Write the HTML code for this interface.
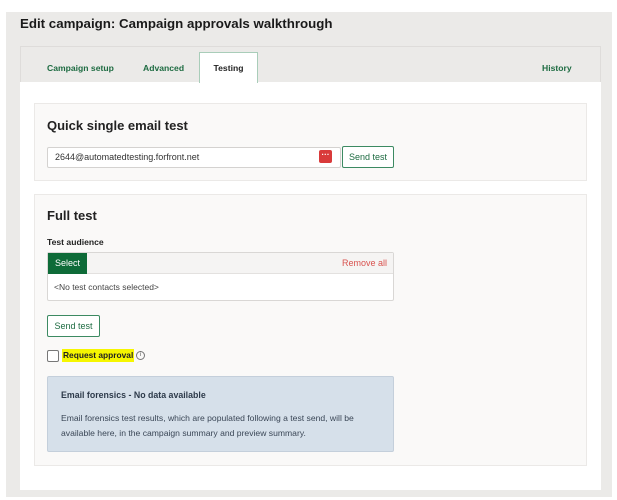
<!DOCTYPE html>
<html><head><meta charset="utf-8"><style>
*{box-sizing:border-box;margin:0;padding:0}
body{width:617px;height:500px;background:#fff;font-family:"Liberation Sans",sans-serif;position:relative;overflow:hidden;color:#222}
.a{position:absolute}
.gray{left:6px;top:12px;width:606px;height:485px;background:#ebeae8}
.title{left:20px;top:16px;font-size:13.3px;font-weight:bold;color:#1a1a1a}
.tabbar{left:20px;top:46px;width:581px;height:37px;background:#ebeae8;border:1px solid #dedcda;border-bottom:none}
.white{left:20px;top:82px;width:581px;height:408px;background:#fff}
.tab{font-size:8.6px;font-weight:bold;color:#1d6b41;top:63px}
.ttab{left:199px;top:52px;width:59px;height:31px;background:#fff;border:1px solid #a9cdb9;border-bottom:none;font-size:8.6px;font-weight:bold;color:#222;text-align:center;line-height:31px}
.card{left:34px;width:553px;background:#faf9f8;border:1px solid #ebe9e7}
h2{position:absolute;font-size:13px;font-weight:bold;color:#222}
.inp{left:47px;top:147px;width:294px;height:21px;background:#fff;border:1px solid #d4d2d0;border-radius:2px;font-size:9px;line-height:19px;padding-left:7px;color:#333}
.btn{background:#fff;border:1px solid #1d6b41;border-radius:2px;font-size:9px;color:#1d6b41;text-align:center}
</style></head><body>
<div class="a gray"></div>
<div class="a title">Edit campaign: Campaign approvals walkthrough</div>
<div class="a tabbar"></div>
<div class="a white"></div>
<div class="a tab" style="left:47px">Campaign setup</div>
<div class="a tab" style="left:143px">Advanced</div>
<div class="a ttab">Testing</div>
<div class="a tab" style="left:542px">History</div>

<div class="a card" style="top:103px;height:78px"></div>
<h2 style="left:47px;top:118px">Quick single email test</h2>
<div class="a inp">2644@automatedtesting.forfront.net</div>
<div class="a" style="left:319px;top:150px;width:13px;height:13px;background:#d93a3a;border-radius:2px;color:#fff;font-size:8px;line-height:10px;text-align:center;font-weight:bold">···</div>
<div class="a btn" style="left:342px;top:146px;width:52px;height:22px;line-height:20px;border-color:#3c8a62">Send test</div>

<div class="a card" style="top:194px;height:272px"></div>
<h2 style="left:47px;top:208px">Full test</h2>
<div class="a" style="left:47px;top:237px;font-size:8.6px;font-weight:bold">Test audience</div>
<div class="a" style="left:47px;top:252px;width:347px;height:49px;background:#fff;border:1px solid #d9d7d5;border-radius:2px"></div>
<div class="a" style="left:48px;top:253px;width:345px;height:21px;background:#f5f4f3;border-bottom:1px solid #e3e1df"></div>
<div class="a" style="left:48px;top:253px;width:39px;height:21px;background:#0e6b38;color:#fff;font-size:9px;line-height:21px;text-align:center">Select</div>
<div class="a" style="left:342px;top:258px;font-size:9px;color:#d9534f">Remove all</div>
<div class="a" style="left:54px;top:282px;font-size:8.5px;color:#444">&lt;No test contacts selected&gt;</div>
<div class="a btn" style="left:47px;top:315px;width:53px;height:22px;line-height:20px;border-color:#3c8a62">Send test</div>
<div class="a" style="left:47px;top:350px;width:12px;height:12px;border:1px solid #777;border-radius:2px;background:#fff"></div>
<div class="a" style="left:62px;top:349px;width:72px;height:13px;background:#f6f600"></div>
<div class="a" style="left:63px;top:350px;font-size:8.4px;font-weight:bold;color:#222">Request approval</div>
<div class="a" style="left:136px;top:351px;width:9px;height:9px;border:1px solid #777;border-radius:50%;font-size:6px;line-height:7px;text-align:center;color:#555">i</div>
<div class="a" style="left:47px;top:376px;width:347px;height:76px;background:#d6e0ea;border:1px solid #c4cfdb;border-radius:2px"></div>
<div class="a" style="left:61px;top:390px;font-size:8.8px;font-weight:bold;color:#2d3a4a">Email forensics - No data available</div>
<div class="a" style="left:61px;top:411px;width:318px;font-size:8.6px;line-height:15px;color:#3a4656">Email forensics test results, which are populated following a test send, will be available here, in the campaign summary and preview summary.</div>
</body></html>
